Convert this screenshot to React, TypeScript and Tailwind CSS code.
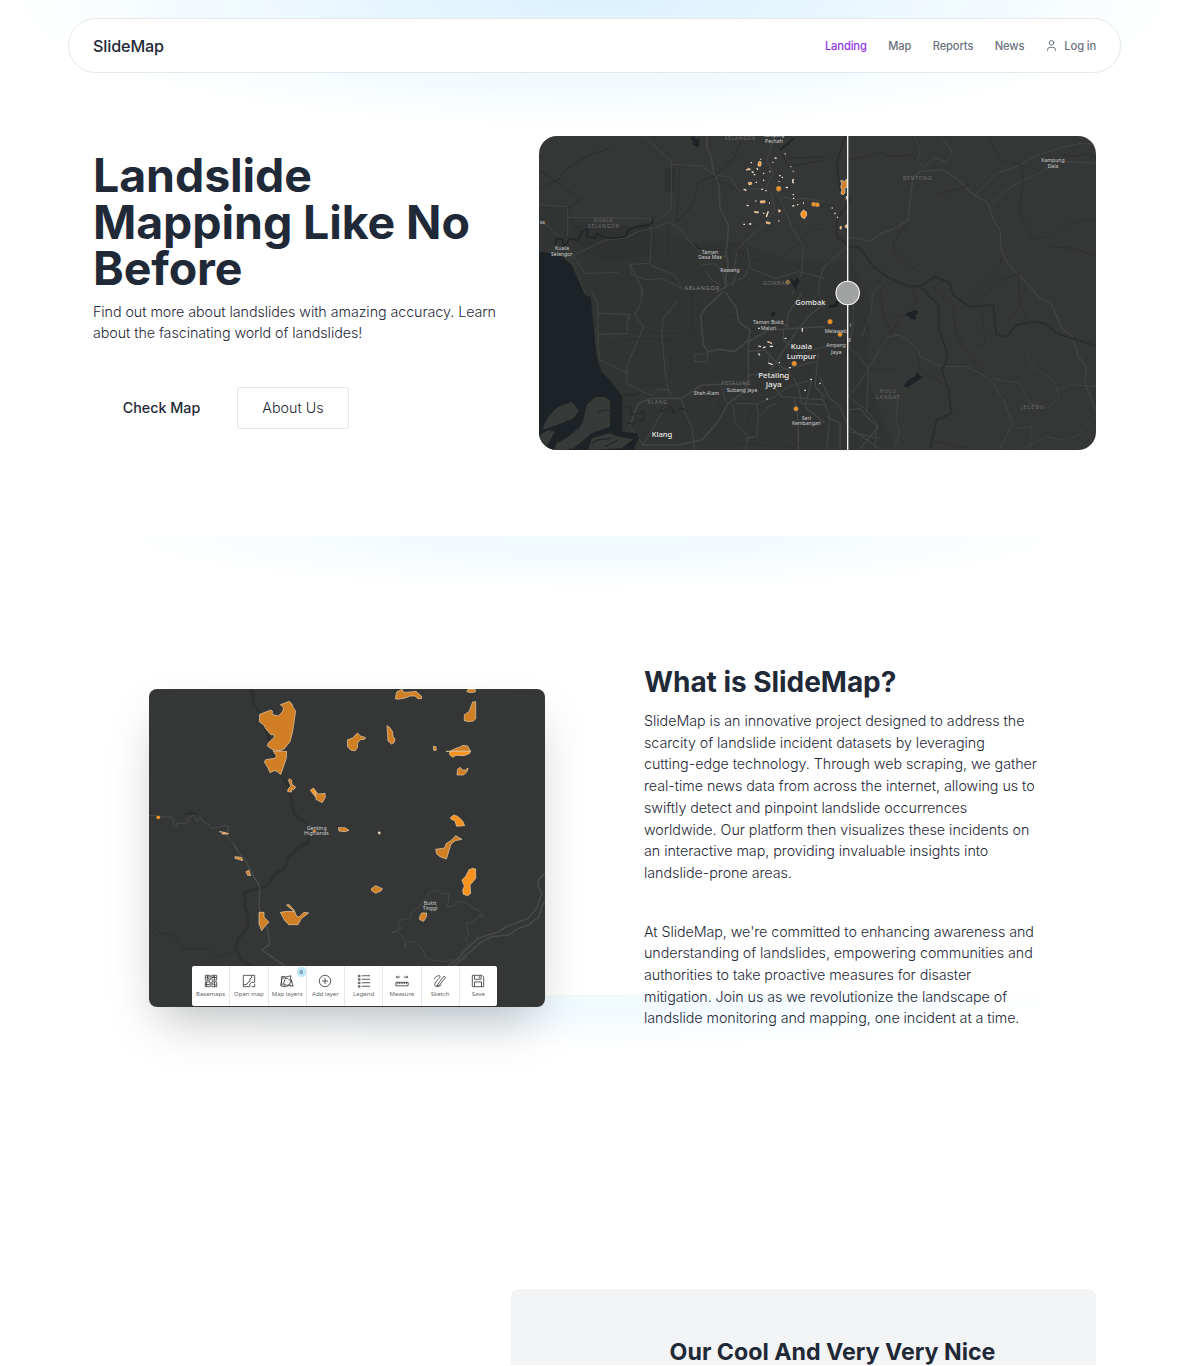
import React from "react";

const ROAD = "#434544";
const WATER = "#1c2225";
const ORANGE = "#d07f25";
const BRIGHT = "#f7921e";

type Label = [string, number, number, number, string, boolean?];

function Labels({ items }: { items: Label[] }) {
  return (
    <>
      {items.map(([t, x, y, w, fill, big], i) => (
        <text
          key={i}
          x={x}
          y={y}
          textAnchor="middle"
          textLength={w}
          lengthAdjust={fill === G || fill === G2 ? "spacing" : "spacingAndGlyphs"}
          fontSize={big ? 23 : fill === G || fill === G2 ? 15.5 : 17}
          fontWeight={big ? 500 : 400}
          fill={fill}
        >
          {t}
        </text>
      ))}
    </>
  );
}

const G = "#6c6e6d";
const G2 = "#808281";
const L = "#cfd0d0";
const W = "#ececec";

function HeroMap() {
  return (
    <svg viewBox="539 136 557 314" className="block h-full w-full" style={{ fontFamily: '"Noto Sans", sans-serif' }}>
      <rect x="539" y="136" width="557" height="314" fill="#353736" />
      <path d="M539 205L570 206 575 222 600 225 660 230 690 242 740 242 785 260 847 262 847 450 620 450 590 300 570 250 539 250Z" fill="#323433" />
      <path d="M600 320L650 330 668 345 700 350 690 450 625 450 610 400 596 350Z" fill="#323433" />
      <path d="M575 225L630 226 655 222 655 255 600 262 575 240ZM665 168h10v24h-10Z" fill="#303231" />
      <path d="M847 250L870 300 868 380 895 450 847 450Z" fill="#323433" />
      {/* north-west quarter */}
      <g transform="translate(535 130) scale(.33333)" fill="none" strokeWidth="3" strokeLinejoin="round">
        <g stroke={ROAD}>
          <path strokeWidth="5" d="M515 18L515 50 528 80 535 125 552 165 555 235 580 285 578 330 572 370 580 400 572 440 575 470 545 485" />
          <path d="M325 18L410 95 408 240 365 270M410 103L500 108 538 135 590 142 610 185 640 175 690 178 705 150 715 130 695 95 705 60 720 20" />
          <path d="M12 225L98 230 98 320M12 270L35 285 90 340 150 430 250 428M98 385L160 355 210 330 270 325 310 305 370 290 400 278 430 290 460 330 500 370 570 380" />
          <path d="M98 262L345 265 350 310 345 400 285 403 290 435 340 450 380 445 440 475 545 478M285 403L310 450 325 495M345 405L420 435 440 475" />
          <path d="M600 365L620 345 690 280 720 240 705 180M725 185L745 225 770 290 805 350 800 430 770 495M635 350L645 400 630 440 575 465M645 415L720 445 790 425 870 445M740 200L780 210 810 205 870 215" />
          <path d="M500 405L540 400 565 430 570 470M510 420L530 450 560 465M605 365L600 410 605 430 590 470M850 495L855 440 870 410" />
        </g>
        <g stroke="#2b2d2c">
          <path d="M12 175L70 150 90 120 160 75 225 55M12 120L138 208 98 232M425 275L460 240 480 200 490 155 538 140 600 80 620 30M538 150L580 165 610 185M740 70L760 110 870 90M760 85L870 80" />
          <path strokeDasharray="8 5" d="M435 105L430 200 425 275 400 280 400 370 425 430M620 370L650 390 740 385 790 340 830 295 870 300M500 355L620 365" />
          <path strokeWidth="5" d="M60 345L65 325 82 328 88 350 105 325 130 330 140 305 160 295 155 320 180 325 185 310 205 320 225 325 270 320 280 300 305 290 345 285 355 268M735 60L760 40 775 25" stroke="#202527" />
        </g>
        <path d="M465 25l12 12-6 6 15 8 8-5-2-20-10 2-4-10ZM478 335l10 15 15 8-16-2ZM765 445l15 8 8-12 6 12-8 14-2 14-8-10Z" fill={WATER} />
      </g>
      {/* south-west quarter */}
      <g transform="translate(535 290) scale(.33333)" fill="none" strokeWidth="3" strokeLinejoin="round">
        <g stroke={ROAD}>
          <path d="M170 5L188 40 190 170 195 210 280 250M190 70L283 73 275 110 278 130 190 133M320 0L318 40 300 75 325 110 300 170 275 230 275 280 350 318 370 297 400 300M425 35L385 85 380 130 390 240 400 300 410 320" />
          <path strokeWidth="5" d="M565 5L510 55 497 80 505 165 520 185 550 178 600 185 640 150 645 120 610 95 605 55 570 5" />
          <path strokeWidth="5" d="M640 150L640 280 620 310 580 340 545 400 500 450 430 465 320 465M640 155L700 120 870 110M285 405L310 340 350 325 440 325 500 285 640 280" />
          <path d="M520 185L515 215 478 215 478 195 520 190M280 405L325 465 390 350M440 325L450 370 470 410 480 480M560 290L570 330 595 350 600 400 640 440 630 480M600 340L665 342 670 370 665 440 630 445M720 342L700 350 672 380M665 342L720 320 760 290 830 270" />
          <path strokeWidth="4" d="M640 185L690 180 735 230 760 240 790 290 800 340 870 345M745 120L745 150 790 190 870 170M800 10L760 70 755 120M870 40L820 80 780 130 700 250 660 255M640 255L700 250 840 215M780 330L790 400 790 480M830 270L810 350 870 400M700 270L740 320 870 330M850 190L840 290 870 320M710 90L760 110M705 190L700 220" />
        </g>
        <path stroke="#2b2d2c" d="M190 120L385 130 470 130 475 0M180 175L270 150 345 145 440 155 410 210 400 280 300 290M540 70L600 80M570 400L600 460 780 470 870 400M530 300L560 360 545 400M650 345L640 400M770 250L780 290M670 50L745 90M465 215L478 200" strokeDasharray="6 4" />
        <path stroke="#292d2e" strokeWidth="5" d="M262 312L290 318 315 308M270 350L285 350 290 375 325 365 325 390 295 400 275 400M380 350L380 365 410 350 415 370 440 355 465 365" />
        <path d="M12-116L75-105 110-75 150 15 167 22 175 100 185 200 200 245 215 260 240 290 262 320 262 425 305 430 312 445 298 470 300 480 12 480Z" fill={WATER} />
        <g fill="#383a39">
          <path d="M22 420Q35 375 70 350L110 335 132 362 115 385 75 402Z" />
          <path d="M105 470L145 390 155 345 180 322 210 320 225 333 225 410 170 430 110 480Z" />
          <path d="M15 435L40 420 60 425 35 470 20 465ZM55 480L65 460 100 440 130 415 120 460 100 480ZM160 480L170 445 225 430 250 440 295 448 260 475Z" />
        </g>
        <path d="M190 365L210 360 223 362M170 460L190 450 230 445M210 470L250 450" stroke={WATER} strokeWidth="3" />
        <path d="M708 72l8-8 6 4-2 8-8 4Z" fill={WATER} />
      </g>
      {/* east half */}
      <g transform="translate(820 130) scale(.33333)" fill="none" strokeWidth="3" strokeLinejoin="round">
        <g stroke="#424443">
          <path strokeWidth="4" d="M86 322L110 325 130 328 150 335 180 312 215 300 265 270 270 210 280 140 300 125 330 122 370 120 410 145 460 195 500 215 512 240 520 270 540 300 545 370 575 415 625 465 660 505 690 515 730 600 755 615 775 680 800 710 795 760 828 840" />
          <path d="M285 20L300 60 295 90 310 120M310 110L345 85 380 95 398 70 365 20M460 200L530 130 600 105 650 75 720 55 780 40 828 42M510 230L560 180 610 150 660 130 700 100 740 95 828 100" />
          <path d="M80 350L30 395 0 420M85 450L100 520 100 590 85 650 120 680 145 720 110 770 85 800 140 840 170 880 165 957M145 700L140 850M145 715L205 620 240 615 290 650 300 680 365 710 440 710 510 745 550 810 578 880 540 957M235 800L228 870 238 910 220 957" />
          <path strokeWidth="4" d="M0 740L25 800 60 830 85 890 180 957M86 840L120 835 150 870 175 890 120 957M20 957L30 860 5 800M60 957L60 880 20 860M85 905L180 925" />
          <path strokeWidth="2.500" d="M205 440L160 490 150 560 125 620M510 745L600 760 630 820 680 835 718 805 710 780 750 765 828 768M620 680L640 710 700 750 715 785M590 895L635 890 630 957M610 957L680 920 720 930 770 920 828 860" />
        </g>
        <g stroke="#2c2e2d">
          <path strokeWidth="6" d="M75 20L50 100 60 180 90 210 50 270 50 320 90 350 120 355 160 410 200 440 265 470 300 468 345 440 390 460 400 495 450 530 520 525 530 615 560 620 590 585 640 575 675 580 710 610 828 648" />
          <path strokeWidth="6" d="M300 470L355 525 358 600 385 680 365 720 385 780 395 850 350 870 330 957" />
          <path strokeWidth="2.500" d="M86 90L130 80 180 65 210 80 270 75 300 100M345 195L400 180 450 165M265 275L220 340 220 365 300 430M220 560L250 550M180 480L190 550 215 610 240 560 275 550 290 500 275 480M340 470L400 530 405 600 430 650 480 720 520 750M450 505L480 470 540 410 545 370M480 510L550 450 595 430 600 520 620 570M600 525L570 570M290 660L300 720 370 760M695 350L760 355 828 380M725 75L770 80 800 70 828 85M345 935L450 957M0 225L40 225" />
          <path strokeDasharray="7 5" d="M505 20L545 95 600 100 610 130 600 240 635 330 700 315 750 280 828 265M150 470L185 445M485 530L495 640 465 650M130 560L150 620M150 718L230 720" />
        </g>
        <path d="M260 548l18-4 14-4 2 12-10 4 6 12-18 0-2-8-10 0ZM250 768l14-18 22-12 4-10 8 2 0 8 12 2-14 10-14 8-20 16ZM25 528l18-6 5-8 10 0-8 18-14 0-10 3Z" fill={WATER} />
      </g>
      {/* detected slide areas */}
      <g transform="translate(735 140) scale(.33333)" stroke="#f6e5d1" strokeWidth="2" fill={BRIGHT}>
        <path d="M70 67l5-4 4 5-2 10-8 0ZM33 90l8-5 6 3-6 2ZM40 128l8-2 3 6-9 3ZM76 183l14-1 0 6-13 1ZM58 214l14 2-4 3-10-2ZM94 245l12 3-2 4-10-2ZM200 215l6-5 8 6 1 10-7 10-8-5-3-8ZM131 209l5 2-1 5-4 0ZM315 260l5 0-2 8-3-2ZM330 257l6-3 0 10-5-2Z" />
        <path fill="none" strokeWidth="4" d="M47 68h4M76 58h3M119 54l6 1M112 67h3M149 42h3M166 80h3M173 94h3M50 95l6 3M56 104h5M65 85l4 4M84 100h4M103 95h3M132 107h5M140 112h4M131 125h3M176 117q-6 7 0 13M152 142l7 1M26 147l8 5M62 127h4M79 148h5M91 152h4M35 195l6 3M61 183h3M102 189h3M172 198l6-1M186 194h4M204 189h3M173 164h4M174 175h4M100 214l-6 17M25 253h5M42 252h7M84 220h4M130 243h3M290 204h3M298 220h4M306 231l3 2M84 121h4M130 148v6" />
        <path d="M317 122h6l5 3 8-8v25l-7 2 1 15-5 5-7-3 3-13-4-8 4-8Z" fill={ORANGE} />
        <path fill="none" strokeWidth="3" d="M334 168v10" />
        <g stroke="#bc8c50" strokeWidth="2.5">
          <circle cx="131" cy="146" r="7" />
          <circle cx="236" cy="193" r="6" />
          <circle cx="247" cy="194" r="6" />
        </g>
      </g>
      <g transform="translate(535 290) scale(.33333)" stroke="#eee" strokeWidth="3.5" fill="none">
        <path d="M697 155l10 3 3 4M669 115h5M802 114v11M749 145h5M670 168l8 2M684 173l8-2M704 169h10M670 190l5 6M700 219l13 5M731 218h4M762 233h5M826 268h5M853 281l4-2M808 301h5M694 327h5" />
        <path d="M746 261h5" stroke={BRIGHT} strokeWidth="5" />
        <path d="M703 157h6" stroke={BRIGHT} strokeWidth="3" />
      </g>
      <g fill={BRIGHT} stroke="#bc8c50" strokeWidth=".7">
        <circle cx="830" cy="321.7" r="2.3" />
        <circle cx="840" cy="334.5" r="2" />
        <circle cx="794.2" cy="363.6" r="2.3" />
        <circle cx="796" cy="408.8" r="2.1" />
        <circle cx="787.7" cy="282.2" r="1.8" fill="#9c6a30" />
      </g>
      <g transform="translate(535 130) scale(.33333)">
        <Labels
          items={[
            ["SELANGOR", 615, 31, 92, G], ["Kampung", 717, 22, 62, L], ["Pechah", 717, 38, 54, L],
            ["KUALA", 205, 277, 56, G], ["SELANGOR", 205, 294, 94, G], ["sa", 22, 281, 14, L],
            ["Kuala", 81, 360, 42, L], ["Selangor", 80, 377, 64, L], ["Taman", 525, 371, 50, L],
            ["Desa Mas", 525, 388, 70, L], ["Rawang", 585, 426, 58, L], ["SELANGOR", 501, 479, 102, G2],
            ["GOMBAK", 722, 465, 76, G],
          ]}
        />
      </g>
      <g transform="translate(535 290) scale(.33333)">
        <Labels
          items={[
            ["Gombak", 826, 44, 90, W, true], ["Taman Bukit", 700, 102, 92, L], ["Maluri", 700, 120, 46, L],
            ["Kuala", 799, 178, 64, W, true], ["Lumpur", 799, 206, 88, W, true], ["Petaling", 716, 265, 92, W, true],
            ["Jaya", 716, 292, 48, W, true], ["PETALING", 602, 284, 88, G], ["Subang Jaya", 621, 305, 92, L],
            ["Shah Alam", 514, 316, 76, L], ["KLANG", 367, 342, 58, G], ["Klang", 381, 441, 62, W, true],
            ["Seri", 814, 389, 28, L], ["Kembangan", 814, 406, 86, L],
          ]}
        />
      </g>
      <g transform="translate(820 130) scale(.33333)">
        <Labels
          items={[
            ["BENTONG", 292, 151, 86, G], ["Kampung", 699, 96, 70, L], ["Dala", 699, 113, 32, L],
            ["Melawati", 47, 609, 66, L], ["Ampang", 48, 652, 58, L], ["Jaya", 49, 671, 32, L],
            ["HULU", 203, 788, 48, G], ["LANGAT", 203, 806, 70, G], ["JELEBU", 637, 838, 66, G],
            ["i", 91, 590, 4, L], ["g", 88, 634, 8, L],
          ]}
        />
      </g>
      <path d="M847.7 136v314" stroke="#fff" strokeWidth="1.3" />
      <circle cx="847.7" cy="293" r="11.7" fill="#a0a1a1" stroke="#fff" strokeWidth="1.1" />
    </svg>
  );
}

function IncidentMap() {
  return (
    <svg viewBox="149 689 396 318" className="block h-full w-full" style={{ fontFamily: '"Noto Sans", sans-serif' }}>
      <rect x="149" y="689" width="396" height="318" fill="#353736" />
      <g transform="translate(145 680) scale(.33333)" fill="none" strokeWidth="3" strokeLinejoin="round">
        <path stroke="#4a4c4b" d="M12 408L28 405 40 411 80 411 86 418 84 435 92 441 96 428 118 432 132 424 128 416 145 406 155 424 165 410 175 425 190 433 200 447 240 436 252 440 250 450 240 462 262 485 275 510" />
        <path stroke="#292b2a" d="M118 401L160 401M133 398L148 396" />
        <g strokeLinecap="round">
          <path stroke="#2b2d2c" strokeWidth="8" d="M318 28L325 45 322 68 344 97 380 200 408 284 425 310 435 340 447 400 462 415 480 424 492 455 490 485 455 510" />
          <path stroke="#343635" strokeWidth="3" d="M318 28L325 45 322 68 344 97M408 284L425 310 435 340 447 400 462 415 480 424 492 455 490 485 455 510" />
        </g>
      </g>
      <g transform="translate(145 845) scale(.33333)" fill="none" strokeWidth="3" strokeLinejoin="round">
        <path stroke="#2b2d2c" strokeWidth="8" d="M475 0L455 12 430 35 418 72 390 85 370 120 345 130 300 142 298 180 310 210 305 255 280 280 272 310 290 345 325 365" />
        <path stroke="#343635" d="M475 0L455 12 430 35 418 72 390 85 370 120 345 130 300 142 298 180 310 210 305 255 280 280 272 310 290 345 325 365" />
        <path stroke="#292b2a" strokeDasharray="7 5" d="M12 235L45 262 90 275 115 312 185 312 218 335 270 318" />
        <path stroke="#4a4c4b" strokeWidth="4" d="M270 0L278 20 300 45 345 128 342 180 350 235 368 250 374 298 350 315 380 335 400 350 415 358 415 370" />
        <path stroke="#4d4f4e" d="M835 165L850 158 850 145 875 136 890 145 910 145 912 170 905 185 925 185 935 170 960 172 985 190 1000 195 1015 215 1000 215 985 230 962 235 972 270 960 280 972 310 955 320 965 340 940 345 920 345 900 350 860 345 840 335 835 315 810 290 790 290 778 308 780 285 760 260 742 262 770 250 758 238 765 225 795 220 800 200 825 185Z" strokeWidth="2" />
        <g stroke="#474948" strokeWidth="5">
          <path d="M1200 85L1180 105 1180 125 1190 145 1175 190 1150 220 1085 245 1060 260 1000 280 960 315 940 340 910 362" />
          <path d="M1200 165L1190 185 1182 215 1150 240 1120 250 1090 270 1040 275 1010 290 970 325 925 365" />
        </g>
      </g>
      <g fill={ORANGE} stroke="#ecd0ae" strokeWidth="2" strokeLinejoin="round">
        <g transform="translate(145 680) scale(.33333)">
          <path d="M344 103L378 90 383 94 381 103 400 108 414 93 415 82 406 74 433 64 441 72 445 83 452 92 443 155 435 185 418 206 405 212 384 210 367 198 370 188 388 172 387 164 378 164 362 146 357 136 343 125Z" />
          <path d="M384 213L425 214 424 235 407 284 396 274 387 272 375 278 369 264 358 246 362 239 389 235 394 228Z" />
          <path d="M430 300L435 296 440 301 441 313 452 321 446 329 440 327 439 336 428 335 429 327 438 318Z" />
          <path fill={BRIGHT} d="M496 331L505 324 511 331 511 350Z" />
          <path d="M511 333L521 342 540 340 541 352 532 368 513 358Z" />
          <path d="M580 443L600 443 612 451 600 455 582 453Z" />
          <path fill="none" strokeWidth="3" d="M223 455L242 458" />
          <path fill="none" stroke="#e0a868" strokeWidth="5" d="M230 461L251 461" />
          <circle cx="40" cy="412" r="5.500" fill={BRIGHT} stroke="none" />
          <circle cx="508" cy="453" r="4" fill={BRIGHT} stroke="none" />
        </g>
        <g transform="translate(345 680) scale(.33333)">
          <path d="M151 56L155 36 172 28 175 37 197 36 213 34 230 49 229 56 219 56 210 48 195 48 180 54 158 58ZM369 28H391V36L376 38 365 35ZM383 66L392 65V117L385 123 373 125 358 122V104L372 95Z" />
          <path d="M126 137L135 143 143 156 144 169 150 177 147 188 139 192 129 183 127 155ZM7 180L23 174 37 159 47 168 62 173 58 178 45 179 37 191 38 202 31 212 18 211 8 201ZM265 199L273 200 274 211 266 211Z" />
          <path d="M316 213L333 205 345 201 353 196 368 198 377 214Z" />
          <path fill={BRIGHT} d="M303 214L377 214 373 221 357 227 333 226 323 232 314 224 314 214Z" />
          <path d="M336 281L338 267 346 262 352 270 361 270 369 264 366 275 356 285 336 285Z" />
          <path fill={BRIGHT} d="M316 413L326 405 338 409 353 423 359 437 335 439 329 421 320 419Z" />
          <path d="M100 456l6 0-2 7-4-2Z" fill="#ddd" />
        </g>
        <g transform="translate(145 845) scale(.33333)">
          <path d="M872 13L899 9 903-4 920-15 932-28 951-17 931-13 918-3 908 30 904 42 885 35 875 27Z" />
          <path fill={BRIGHT} d="M972 74L984 70 992 72V100L984 110 975 120 977 145 968 152 955 148 953 135 958 124 951 105 962 94Z" />
          <path d="M679 131L692 122 712 131 709 137 692 145 680 137ZM824 215L830 204 845 204 844 215 836 229 824 224ZM342 202H357V216L372 232 360 243 350 257 342 236ZM406 202L426 199 448 200 424 180 433 179 448 197 455 214 462 216 477 202 491 204 469 221 459 239 431 239 418 225Z" />
          <path d="M270 35L289 37 293 47 270 40ZM303 80L312 76 317 92 308 91Z" />
        </g>
      </g>
      <g transform="translate(145 680) scale(.33333)">
        <Labels items={[["Genting", 515, 449, 60, L], ["Highlands", 514, 466, 74, L]]} />
      </g>
      <g transform="translate(145 845) scale(.33333)">
        <Labels items={[["Bukit", 855, 179, 38, L], ["Tinggi", 855, 195, 44, L]]} />
      </g>
    </svg>
  );
}

const TOOLS: { name: string; icon: React.ReactNode }[] = [
  {
    name: "Basemaps",
    icon: <path d="M1.500 1.500h5.500v5.500h-5.500zM9 1.500h5.500v5.500H9zM1.500 9h5.500v5.500h-5.500zM9 9h5.500v5.500H9zM1.500 4l5-1M4 1.500v5M9 4h5.500M12 1.500v5M3 9v5.500M1.500 12h5M9 11l5.500 2M12 9v5.500M4 4l2 2M10 2l2 3" />,
  },
  { name: "Open map", icon: <path d="M9 14.500H1.500v-13h13V9M14.500 11v3.500H11M11 1.500v3l-2 1v3l-2 1-1 2-4.500 1M9 14.500v-3l2-2h3.500" /> },
  { name: "Map layers", icon: <path d="M2.500 2.500l4 1 6-1.500-.5 3 3 9-4-1-5 1.500-5-1zM2.500 2.500l-1.500 11M3.500 5l3-1.500M6 5l-2 6 4 2 3-1 1-4-3-3zM2 11l4 3M12 5l2 5M10 12l3 2" /> },
  { name: "Add layer", icon: <path d="M14.500 8a6.500 6.500 0 1 1-13 0 6.500 6.500 0 0 1 13 0ZM8 4.500v7M4.500 8h7" /> },
  { name: "Legend", icon: <path d="M5.500 2H15M5.500 6H15M5.500 10H15M5.500 14H15M1.500 1.500h2v1.500h-2zM1.500 5.500h2v1.500h-2zM1.500 9.500h2V11h-2zM1.500 13.500h2V15h-2z" /> },
  { name: "Measure", icon: <path d="M1 9.500h14v4H1zM3 9.500v2M5 9.500v2M7 9.500v2M9 9.500v2M11 9.500v2M13 9.500v2M1.500 3.500H6M3 2L1.500 3.500 3 5M10 3.500h4.500M13 2l1.500 1.500L13 5" /> },
  { name: "Sketch", icon: <path d="M5.500 11.500l7-9 2 1.500-7.500 9-2.500 1zM1.500 6c1-3.500 5.500-5 6.500-3.500S2.500 8.500 2 11.500 5 15.500 9.500 12.500" /> },
  { name: "Save", icon: <path d="M1.500 1.500h11l2 2v11h-13zM4 1.500v4.500h7.500V1.500M4 14.500V9h8v5.500M9.500 2.500V5" /> },
];

function Toolbar() {
  return (
    <div className="absolute top-[277px] left-[43px] flex h-[40px] w-[305px] rounded-[2px] bg-white font-['Noto_Sans',sans-serif] text-[#666]">
      {TOOLS.map((t, i) => (
        <div
          key={t.name}
          className={
            "relative flex flex-1 flex-col items-center pt-[7.5px] " +
            (i > 0 ? "border-l border-[#e8e8e8]" : "")
          }
        >
          <svg viewBox="0 0 16 16" className="h-[14px] w-[14px] shrink-0" fill="none" stroke="#444" strokeWidth="1">
            {t.icon}
          </svg>
          <span className="mt-[2.5px] text-[6px] leading-[8px] whitespace-nowrap">{t.name}</span>
          {t.name === "Map layers" && (
            <span className="absolute top-[1px] right-0 flex h-[10px] w-[9px] items-center justify-center rounded-full bg-[#bfe6fb] text-[6px] leading-none text-[#345]">
              6
            </span>
          )}
        </div>
      ))}
    </div>
  );
}

function NavBar() {
  return (
    <header className="relative mx-auto mt-[18px] flex h-[55px] w-[1053px] items-center justify-between rounded-full border border-[#e5e7eb] bg-white px-6">
      <a className="pt-px text-[16.2px] font-medium tracking-[-0.15px] text-[#1f2937]">SlideMap</a>
      <nav className="flex items-center pt-px text-[11.2px] font-medium tracking-[-0.15px] text-[#6b7280]">
        <a className="text-[#9333ea]">Landing</a>
        <a className="ml-[21.5px]">Map</a>
        <a className="ml-[21.5px]">Reports</a>
        <a className="ml-[21.5px]">News</a>
        <a className="ml-[21px] flex items-center">
          <svg
            viewBox="0 0 13 13"
            className="mr-[6px] h-[13px] w-[13px]"
            fill="none"
            stroke="currentColor"
            strokeWidth="1"
            strokeLinecap="round"
          >
            <circle cx="6.5" cy="3.8" r="2.3" />
            <path d="M2.600 11.500v-.6a2.600 2.600 0 0 1 2.600-2.600h2.600a2.600 2.600 0 0 1 2.600 2.600v.6" />
          </svg>
          Log in
        </a>
      </nav>
    </header>
  );
}

export default function App() {
  return (
    <div className="relative h-[1366px] w-[1189px] overflow-hidden bg-white font-['Inter',sans-serif] text-[#1f2937]">
      <div className="absolute inset-x-0 top-0 h-[140px] bg-[radial-gradient(590px_130px_at_594px_0px,#dcf1fe_0%,#e4f5fe_30%,#f1faff_62%,#fbfeff_88%,#ffffff_100%)]" />
      <div className="absolute inset-x-0 top-[536px] h-[70px] bg-[radial-gradient(480px_54px_at_594px_0px,#effaff_0%,#f5fbff_45%,#fbfeff_80%,#ffffff_100%)]" />
      <div className="absolute inset-x-0 top-[995px] h-[70px] bg-[radial-gradient(480px_54px_at_594px_0px,#effaff_0%,#f5fbff_45%,#fbfeff_80%,#ffffff_100%)]" />

      <NavBar />

      <section className="relative mt-[63px] flex h-[314px] justify-between pr-[93px] pl-[93px]">
        <div className="w-[420px] pt-[16px]">
          <h1 className="text-[46.5px] leading-[46.5px] font-bold tracking-[-0.1px] whitespace-nowrap">
            Landslide
            <br />
            Mapping Like No
            <br />
            Before
          </h1>
          <p className="mt-[9px] text-[14.3px] leading-[21.7px] font-light tracking-[-0.065px] whitespace-nowrap">
            Find out more about landslides with amazing accuracy. Learn
            <br />
            about the fascinating world of landslides!
          </p>
          <div className="mt-[43px] flex">
            <a className="flex h-[42px] w-[137px] items-center justify-center text-[14.3px] font-medium">Check Map</a>
            <a className="ml-[7px] flex h-[42px] w-[112px] items-center justify-center rounded-[3px] border border-[#e5e7eb] bg-white text-[14.3px] font-light">
              About Us
            </a>
          </div>
        </div>
        <div className="h-[314px] w-[557px] overflow-hidden rounded-[18px]">
          <HeroMap />
        </div>
      </section>

      <section className="relative mt-[214px] flex pl-[149px]">
        <div className="relative mt-[25px] h-[318px] w-[396px] shrink-0 rounded-[8px] shadow-[0_23px_46px_-11px_rgba(0,0,0,0.25)]">
          <div className="relative h-full w-full overflow-hidden rounded-[8px]">
            <IncidentMap />
            <Toolbar />
          </div>
        </div>
        <div className="ml-[99px] w-[420px] whitespace-nowrap">
          <h2 className="text-[28px] leading-[36px] font-bold tracking-[-0.04px]">What is SlideMap?</h2>
          <p className="mt-[10px] text-[14.3px] leading-[21.7px] font-light tracking-[-0.04px]">
            SlideMap is an innovative project designed to address the
            <br />
            scarcity of landslide incident datasets by leveraging
            <br />
            cutting-edge technology. Through web scraping, we gather
            <br />
            real-time news data from across the internet, allowing us to
            <br />
            swiftly detect and pinpoint landslide occurrences
            <br />
            worldwide. Our platform then visualizes these incidents on
            <br />
            an interactive map, providing invaluable insights into
            <br />
            landslide-prone areas.
          </p>
          <p className="mt-[37px] text-[14.3px] leading-[21.7px] font-light tracking-[-0.07px]">
            At SlideMap, we're committed to enhancing awareness and
            <br />
            understanding of landslides, empowering communities and
            <br />
            authorities to take proactive measures for disaster
            <br />
            mitigation. Join us as we revolutionize the landscape of
            <br />
            landslide monitoring and mapping, one incident at a time.
          </p>
        </div>
      </section>

      <section className="absolute top-[1289px] right-[93px] h-[76px] w-[585px] overflow-hidden rounded-t-[8px] bg-[#f3f4f6] pt-[48px] pl-[58px] text-center">
        <h2 className="text-[23.2px] leading-[30px] font-bold whitespace-nowrap">Our Cool And Very Very Nice</h2>
      </section>
    </div>
  );
}
